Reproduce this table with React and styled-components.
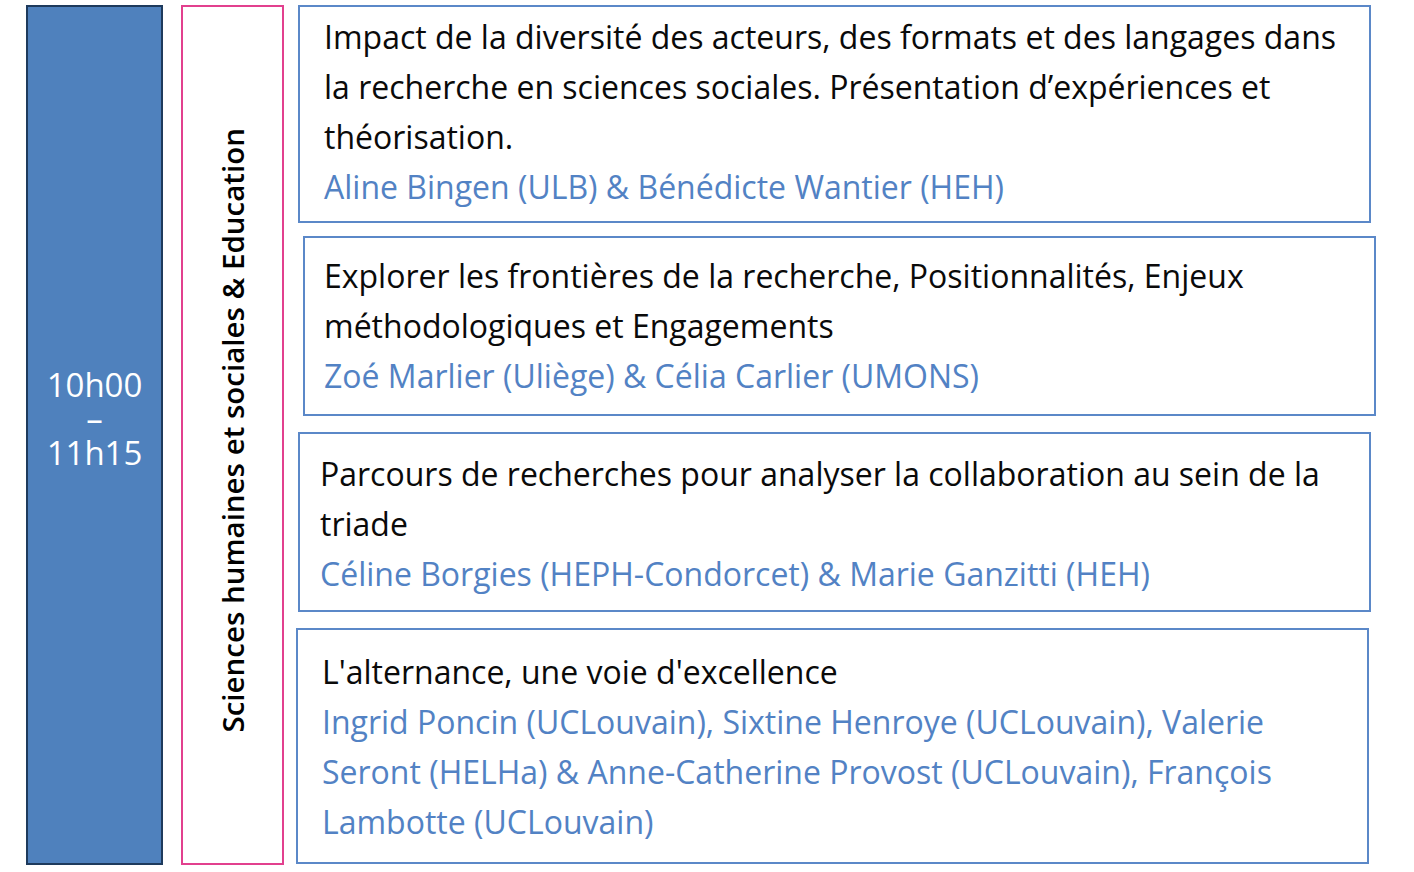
import React from 'react';
import styled, { createGlobalStyle } from 'styled-components';

const Global = createGlobalStyle`
  html, body {
    margin: 0;
    padding: 0;
    background: #ffffff;
  }
  body {
    font-family: 'Open Sans', 'Noto Sans', sans-serif;
  }
`;

const sessions = [
  {
    shift: 2,
    top: 0,
    pad: [5, 11, 24],
    title: ['Impact de la diversité des acteurs, des formats et des langages dans', 'la recherche en sciences sociales. Présentation d’expériences et', 'théorisation.'],
    authors: ['Aline Bingen (ULB) & Bénédicte Wantier (HEH)'],
    height: 218,
  },
  {
    shift: 7,
    top: 13,
    pad: [13, 16, 19],
    title: ['Explorer les frontières de la recherche, Positionnalités, Enjeux', 'méthodologiques et Engagements'],
    authors: ['Zoé Marlier (Uliège) & Célia Carlier (UMONS)'],
    height: 180,
  },
  {
    shift: 2,
    top: 16,
    pad: [15, 14, 20],
    title: ['Parcours de recherches pour analyser la collaboration au sein de la', 'triade'],
    authors: ['Céline Borgies (HEPH-Condorcet) & Marie Ganzitti (HEH)'],
    height: 180,
  },
  {
    shift: 0,
    top: 16,
    pad: [17, 18, 24],
    title: ["L'alternance, une voie d'excellence"],
    authors: ['Ingrid Poncin (UCLouvain), Sixtine Henroye (UCLouvain), Valerie', 'Seront (HELHa) & Anne-Catherine Provost (UCLouvain), François', 'Lambotte (UCLouvain)'],
    height: 236,
  },
];

const Page = () => (
  <Row>
    <TimeBox>
      <TimeLine>10h00</TimeLine>
      <TimeLine>–</TimeLine>
      <TimeLine>11h15</TimeLine>
    </TimeBox>
    <TrackBox>
      <TrackLabel>Sciences humaines et sociales &amp; Education</TrackLabel>
    </TrackBox>
    <Sessions>
      {sessions.map((s, i) => (
        <Session key={i} $shift={s.shift} $top={s.top} $pad={s.pad} $h={s.height}>
          {s.title.map((t, j) => <Title key={j}>{t}</Title>)}
          {s.authors.map((a, j) => <Authors key={j}>{a}</Authors>)}
        </Session>
      ))}
    </Sessions>
  </Row>
);

export default function App() {
  return (
    <>
      <Global />
      <Page />
    </>
  );
}

const Row = styled.div`
  display: flex;
  align-items: flex-start;
  padding: 5px 0 0 26px;
  width: 1414px;
  box-sizing: border-box;
`;

const TimeBox = styled.div`
  flex: none;
  width: 137px;
  height: 860px;
  box-sizing: border-box;
  background: #4f81bd;
  border: 2px solid #1e3a5c;
  display: flex;
  flex-direction: column;
  align-items: center;
  justify-content: center;
  padding-bottom: 33px;
`;

const TimeLine = styled.div`
  color: #ffffff;
  font-size: 33px;
  font-weight: 500;
  line-height: 34px;
  text-align: center;
`;

const TrackBox = styled.div`
  flex: none;
  width: 103px;
  height: 860px;
  margin-left: 18px;
  box-sizing: border-box;
  border: 2px solid #e2408e;
  display: flex;
  align-items: center;
  justify-content: center;
  padding-bottom: 9px;
`;

const TrackLabel = styled.div`
  writing-mode: vertical-rl;
  transform: rotate(180deg);
  font-size: 29.5px;
  font-weight: 600;
  color: #000000;
  white-space: nowrap;
`;

const Sessions = styled.div`
  display: flex;
  flex-direction: column;
  margin-left: 12px;
`;

const Session = styled.div`
  box-sizing: border-box;
  width: 1073px;
  height: ${(p) => p.$h}px;
  margin-top: ${(p) => p.$top}px;
  margin-left: ${(p) => p.$shift}px;
  border: 2px solid #5b88c8;
  padding: ${(p) => `${p.$pad[0]}px 10px ${p.$pad[1]}px ${p.$pad[2]}px`};
  display: flex;
  flex-direction: column;
`;

const Title = styled.div`
  font-size: 32px;
  line-height: 50px;
  color: #0a0a0a;
  white-space: nowrap;
`;

const Authors = styled(Title)`
  color: #5282c4;
`;
